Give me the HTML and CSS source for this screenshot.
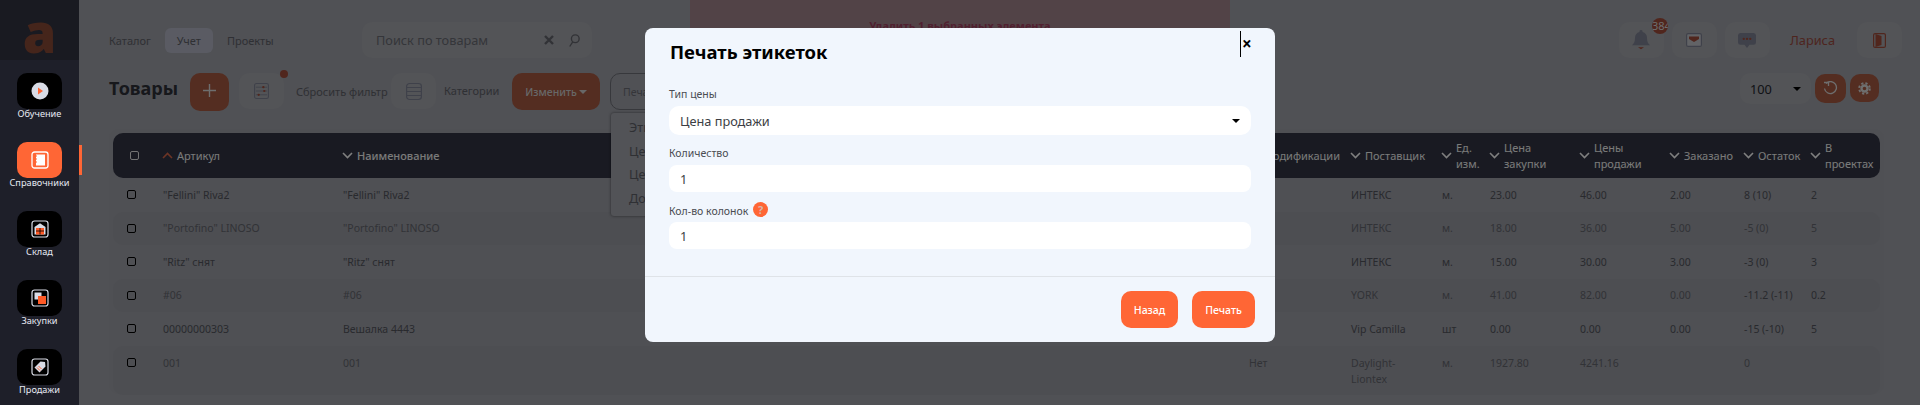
FILE: index.html
```html
<!DOCTYPE html>
<html lang="ru">
<head>
	<meta charset="UTF-8">
	<title>Товары</title>
	<link rel="stylesheet" href="styles.css">
</head>
<body>
	<div class="page">
		<aside class="side">
			<div class="logo">a</div>
			<nav class="menu">
				<a class="item">
					<span class="ico"><svg width="18" height="18" viewBox="0 0 18 18"><circle cx="9" cy="9" r="8.5" fill="#d9dce6"/><path d="M7 5.5l5 3.5-5 3.5z" fill="#ff6635"/></svg></span>
					<span class="lbl">Обучение</span>
				</a>
				<a class="item on">
					<span class="ico"><svg width="18" height="18" viewBox="0 0 18 18" fill="none" stroke="#fff"><rect x="1" y="1" width="16" height="16" rx="2.5" stroke-width="1.3"/><path d="M5 3.5h9v11H5z" fill="#fff" stroke="none"/><path d="M3 5h3M3 8h3M3 11h3" stroke="#ff6635" stroke-width="1.2"/></svg></span>
					<span class="lbl">Справочники</span>
				</a>
				<a class="item">
					<span class="ico"><svg width="18" height="18" viewBox="0 0 18 18" fill="none" stroke="#d9dce6"><rect x="1" y="1" width="16" height="16" rx="2.5" stroke-width="1.2"/><path d="M3.500 7L9 3.200 14.500 7v7.500h-11z" fill="#d9dce6" stroke="none"/><path d="M5 8h8v6.500H5z" fill="#ff5a26" stroke="none"/><path d="M9 8v6.500M5 11h8" stroke="#000" stroke-width=".8"/></svg></span>
					<span class="lbl">Склад</span>
				</a>
				<a class="item">
					<span class="ico"><svg width="18" height="18" viewBox="0 0 18 18" fill="none"><rect x="1" y="1" width="16" height="16" rx="2.5" stroke="#d9dce6" stroke-width="1.2"/><path d="M3.500 3.500h7v7h-7z" fill="#d9dce6"/><path d="M7 7h8v8H7z" fill="#ff5a26"/></svg></span>
					<span class="lbl">Закупки</span>
				</a>
				<a class="item">
					<span class="ico"><svg width="18" height="18" viewBox="0 0 18 18" fill="none"><rect x="1" y="1" width="16" height="16" rx="2.5" stroke="#d9dce6" stroke-width="1.2"/><path d="M9.500 3.500l4.500.5.500 4.500-6 6-5-5z" fill="#d9dce6"/><path d="M6 9.500l3 3M7.500 8l3 3" stroke="#ff6635"/></svg></span>
					<span class="lbl">Продажи</span>
				</a>
			</nav>
		</aside>

		<main class="main">
			<div class="alert">Удалить 1 выбранных элемента</div>

			<header class="top">
				<ul class="tabs">
					<li>Каталог</li>
					<li class="cur">Учет</li>
					<li>Проекты</li>
				</ul>
				<div class="search">
					<span class="ph">Поиск по товарам</span>
					<svg width="10" height="10" viewBox="0 0 10 10"><path d="M1 1l8 8M9 1l-8 8" stroke="#2e3038" stroke-width="2.400"/></svg>
					<svg width="12" height="15" viewBox="0 0 14 16" fill="none" stroke="#2e3038" stroke-width="1.600"><circle cx="8.500" cy="6" r="4.500"/><path d="M5.500 9.500L2 15"/></svg>
				</div>
				<div class="user">
					<span class="sq bell">
						<svg width="18" height="23" viewBox="0 0 18 26" preserveAspectRatio="none"><path d="M9 1a1.500 1.500 0 011.500 1.500v1c3 .8 4.500 3.500 4.500 6.500 0 4 .8 6.500 3 8.500H0c2.200-2 3-4.500 3-8.500 0-3 1.500-5.700 4.500-6.500v-1A1.500 1.500 0 019 1z" fill="#7e8294"/><path d="M6 20.500h6l-3 2.500z" fill="#a04c3a"/></svg>
						<b class="badge">384</b>
					</span>
					<span class="sq"><svg width="16" height="14" viewBox="0 0 16 14" fill="none"><rect x=".6" y=".6" width="14.800" height="12.800" rx="1.500" fill="#c4c6cc" stroke="#7e8294" stroke-width="1.200"/><path d="M3 3.500h10v2.500l-5 3-5-3z" fill="#a04c3a"/></svg></span>
					<span class="sq"><svg width="18" height="15" viewBox="0 0 22 18" preserveAspectRatio="none"><path d="M3 0h16a3 3 0 013 3v8a3 3 0 01-3 3h-5l-3 4-3-4H3a3 3 0 01-3-3V3a3 3 0 013-3z" fill="#7e8294"/><circle cx="7" cy="7" r="1.400" fill="#a04c3a"/><circle cx="11" cy="7" r="1.400" fill="#a04c3a"/><circle cx="15" cy="7" r="1.400" fill="#a04c3a"/></svg></span>
					<span class="uname">Лариса</span>
					<span class="sq"><svg width="13" height="15" viewBox="0 0 13 15" fill="none" stroke="#a04c3a" stroke-width="1.200"><rect x=".6" y=".6" width="11.800" height="13.800" rx="1.500"/><path d="M2.500 1v13l6-2V3z" fill="#a04c3a" stroke="none"/></svg></span>
				</div>
			</header>

			<div class="tools">
				<h1>Товары</h1>
				<button class="add"><svg width="13" height="13" viewBox="0 0 14 14"><path d="M7 0v14M0 7h14" stroke="#dcdcdc" stroke-width="1.500"/></svg></button>
				<span class="sq filter">
					<svg width="15" height="16" viewBox="0 0 16 19" fill="none" preserveAspectRatio="none"><rect x=".6" y=".6" width="14.800" height="17.800" rx="2" stroke="#7e8294" stroke-width="1.200"/><path d="M2 5h12M2 9.500h12M2 14h12" stroke="#7e8294"/><circle cx="10" cy="5" r="1.300" fill="#a04c3a"/><circle cx="11" cy="9.500" r="1.300" fill="#a04c3a"/><circle cx="5" cy="14" r="1.300" fill="#a04c3a"/></svg>
					<i class="dot"></i>
				</span>
				<span class="link reset">Сбросить фильтр</span>
				<span class="sq"><svg width="16" height="17" viewBox="0 0 16 19" fill="none" stroke="#7e8294" stroke-width="1.200" preserveAspectRatio="none"><rect x=".6" y=".6" width="14.800" height="17.800" rx="3"/><path d="M1 5h14M1 9.500h14M1 14h14"/></svg></span>
				<span class="link cats">Категории</span>
				<button class="edit">Изменить<i class="caret"></i></button>
				<div class="print">
					<button class="print-btn">Печать</button>
					<ul class="drop">
						<li>Этикетки</li>
						<li>Ценники</li>
						<li>Цены</li>
						<li>Документы</li>
					</ul>
				</div>
				<div class="tools-right">
					<div class="per">100<i class="caret dark"></i></div>
					<button class="mini reload"><svg width="15" height="15" viewBox="0 0 15 15" fill="none" stroke="#dcdcdc" stroke-width="1.300"><path d="M3 2.500a6 6 0 11-1.500 5"/><path d="M1 1.500h4.500V5"/></svg></button>
					<button class="mini gear"><svg width="13" height="13" viewBox="0 0 13 13" fill="none" stroke="#dcdcdc"><circle cx="6.500" cy="6.500" r="3" stroke-width="2.400"/><circle cx="6.500" cy="6.500" r="5.300" stroke-width="2" stroke-dasharray="2.200 2"/></svg></button>
				</div>
			</div>

			<section class="panel">
				<div class="row head">
					<div class="cell"><i class="box"></i></div>
					<div class="cell"><svg class="chev" viewBox="0 0 11 7"><path d="M1 6l4.500-4.500L10 6" stroke="#d8684a"/></svg><span>Артикул</span></div>
					<div class="cell strong"><svg class="chev" viewBox="0 0 11 7"><path d="M1 1l4.500 4.500L10 1"/></svg><span>Наименование</span></div>
					<div class="cell"><svg class="chev" viewBox="0 0 11 7"><path d="M1 1l4.500 4.500L10 1"/></svg><span>Модификации</span></div>
					<div class="cell"><svg class="chev" viewBox="0 0 11 7"><path d="M1 1l4.500 4.500L10 1"/></svg><span>Поставщик</span></div>
					<div class="cell"><svg class="chev" viewBox="0 0 11 7"><path d="M1 1l4.500 4.500L10 1"/></svg><span>Ед. изм.</span></div>
					<div class="cell"><svg class="chev" viewBox="0 0 11 7"><path d="M1 1l4.500 4.500L10 1"/></svg><span>Цена закупки</span></div>
					<div class="cell"><svg class="chev" viewBox="0 0 11 7"><path d="M1 1l4.500 4.500L10 1"/></svg><span>Цены продажи</span></div>
					<div class="cell"><svg class="chev" viewBox="0 0 11 7"><path d="M1 1l4.500 4.500L10 1"/></svg><span>Заказано</span></div>
					<div class="cell"><svg class="chev" viewBox="0 0 11 7"><path d="M1 1l4.500 4.500L10 1"/></svg><span>Остаток</span></div>
					<div class="cell"><svg class="chev" viewBox="0 0 11 7"><path d="M1 1l4.500 4.500L10 1"/></svg><span>В проектах</span></div>
				</div>
				<div class="row">
					<div><i class="box"></i></div><div>"Fellini" Riva2</div><div>"Fellini" Riva2</div><div></div><div>ИНТЕКС</div><div>м.</div><div>23.00</div><div>46.00</div><div>2.00</div><div>8 (10)</div><div>2</div>
				</div>
				<div class="row alt">
					<div><i class="box"></i></div><div>"Portofino" LINOSO</div><div>"Portofino" LINOSO</div><div></div><div>ИНТЕКС</div><div>м.</div><div>18.00</div><div>36.00</div><div>5.00</div><div>-5 (0)</div><div>5</div>
				</div>
				<div class="row">
					<div><i class="box"></i></div><div>"Ritz" снят</div><div>"Ritz" снят</div><div></div><div>ИНТЕКС</div><div>м.</div><div>15.00</div><div>30.00</div><div>3.00</div><div>-3 (0)</div><div>3</div>
				</div>
				<div class="row alt">
					<div><i class="box"></i></div><div>#06</div><div>#06</div><div></div><div>YORK</div><div>м.</div><div>41.00</div><div>82.00</div><div>0.00</div><div class="dk">-11.2 (-11)</div><div class="dk">0.2</div>
				</div>
				<div class="row">
					<div><i class="box"></i></div><div>00000000303</div><div>Вешалка 4443</div><div></div><div>Vip Camilla</div><div>шт</div><div>0.00</div><div>0.00</div><div>0.00</div><div>-15 (-10)</div><div>5</div>
				</div>
				<div class="row alt last">
					<div><i class="box"></i></div><div>001</div><div>001</div><div>Нет</div><div>Daylight-<br>Liontex</div><div>м.</div><div>1927.80</div><div>4241.16</div><div></div><div>0</div><div></div>
				</div>
			</section>
		</main>

		<div class="shade">
			<div class="modal">
				<span class="close">×</span>
				<h2>Печать этикеток</h2>
				<form class="form">
					<label>Тип цены</label>
					<div class="field sel">Цена продажи<i class="caret dark"></i></div>
					<label>Количество</label>
					<div class="field">1</div>
					<label>Кол-во колонок <b class="help">?</b></label>
					<div class="field">1</div>
				</form>
				<div class="foot">
					<button class="btn back">Назад</button>
					<button class="btn">Печать</button>
				</div>
			</div>
		</div>
	</div>
</body>
</html>
```
FILE: styles.css
```css
*{
	margin: 0;
	padding: 0;
	box-sizing: border-box;
}
html,body{
	height: 100%;
	overflow: hidden;
}
body{
	font-family: "Noto Sans", "Liberation Sans", sans-serif;
	font-size: 10.5px;
	background-color: #a0a2aa;
}
ul{
	list-style: none;
}
button{
	font-family: inherit;
	border: 0;
}
i{
	font-style: normal;
}
.page{
	position: relative;
	display: flex;
	height: 405px;
	overflow: hidden;
}

/* sidebar */
.side{
	width: 79px;
	flex: none;
	background-color: #3c3e52;
}
.logo{
	height: 60px;
	padding-top: 4px;
	background-color: #323442;
	color: #8a4a36;
	font-size: 54px;
	font-weight: 900;
	line-height: 56px;
	text-align: center;
}
.menu{
	position: relative;
	z-index: 20;
	height: 345px;
	padding-top: 13px;
	background-color: #1e1f29;
}
.item{
	position: relative;
	display: flex;
	flex-direction: column;
	align-items: center;
	height: 69px;
}
.ico{
	display: flex;
	align-items: center;
	justify-content: center;
	width: 45px;
	height: 36px;
	background-color: #000;
	border-radius: 10px;
}
.lbl{
	font-size: 9.2px;
	line-height: 10px;
	color: #e6e9f2;
}
.on .ico{
	background-color: #ff6635;
}
.on::after{
	content: "";
	position: absolute;
	right: -3px;
	top: 3px;
	width: 3px;
	height: 30px;
	background-color: #ff6635;
}

/* main */
.main{
	position: relative;
	flex: 1;
	min-width: 0;
	padding-left: 30px;
}
.alert{
	position: absolute;
	left: 611px;
	top: 0;
	width: 540px;
	height: 50px;
	padding-top: 18px;
	background-color: #a4868f;
	color: #a04060;
	font-size: 11px;
	font-weight: 700;
	text-align: center;
}
.top{
	display: flex;
	align-items: center;
	height: 36px;
	margin-top: 22px;
	padding-right: 18px;
}
.tabs{
	display: flex;
	align-items: center;
	gap: 14px;
	width: 253px;
	font-size: 11px;
	color: #5e6068;
}
.tabs li{
	line-height: 25px;
}
.tabs .cur{
	padding: 0 12px;
	background-color: #b4b7c6;
	border-radius: 6px;
}
.search{
	display: flex;
	align-items: center;
	width: 230px;
	height: 36px;
	padding: 0 12px 0 14px;
	background-color: #a6a8ae;
	border-radius: 10px;
}
.ph{
	flex: 1;
	font-size: 12.750px;
	color: #6a6c74;
}
.search svg{
	margin-left: 14px;
	opacity: .55;
}
.user{
	display: flex;
	align-items: center;
	margin-left: auto;
	gap: 8px;
}
.sq{
	position: relative;
	display: flex;
	align-items: center;
	justify-content: center;
	width: 45px;
	height: 36px;
	background-color: #a6a8ae;
	border-radius: 10px;
}
.badge{
	position: absolute;
	right: -4px;
	top: -4px;
	width: 16px;
	height: 16px;
	overflow: hidden;
	background-color: #a04c3a;
	border-radius: 50%;
	color: #dcdcdc;
	font-size: 11px;
	font-weight: 400;
	line-height: 16px;
	white-space: nowrap;
}
.uname{
	margin: 0 14px 0 12px;
	font-size: 12.750px;
	color: #9c4a3e;
}

/* toolbar */
.tools{
	display: flex;
	align-items: flex-start;
	height: 56px;
	margin-top: 15px;
	padding-right: 41px;
}
h1{
	width: 81px;
	font-size: 18px;
	line-height: 30px;
	color: #2e3038;
}
.add{
	width: 39px;
	height: 38px;
	background-color: #a85a42;
	border-radius: 10px;
}
.filter{
	margin-left: 10px;
}
.dot{
	position: absolute;
	right: -4px;
	top: -3px;
	width: 8px;
	height: 8px;
	background-color: #a04c3a;
	border-radius: 50%;
}
.link{
	font-size: 11px;
	line-height: 37px;
	color: #5e6068;
}
.reset{
	width: 95px;
	margin-left: 12px;
	white-space: nowrap;
}
.cats{
	width: 68px;
	margin-left: 8px;
	line-height: 35px;
}
.edit{
	display: flex;
	align-items: center;
	justify-content: center;
	width: 88px;
	height: 37px;
	background-color: #a85a42;
	border-radius: 10px;
	color: #cfcfcf;
	font-size: 10.5px;
	font-weight: 500;
}
.caret{
	width: 0;
	height: 0;
	margin-left: 2px;
	border-top: 4px solid #cfcfcf;
	border-left: 4px solid transparent;
	border-right: 4px solid transparent;
}
.caret.dark{
	border-top-color: #000;
	margin-left: auto;
}
.print{
	position: relative;
	margin-left: 10px;
}
.print-btn{
	width: 95px;
	height: 37px;
	padding-left: 12px;
	background-color: transparent;
	border: 1px solid #6e7078;
	border-radius: 10px;
	color: #6a6c74;
	font-size: 10.5px;
	text-align: left;
}
.drop{
	position: absolute;
	left: 1px;
	top: 40px;
	width: 160px;
	height: 103px;
	padding: 3px 0 0 18px;
	background-color: #a4a6ae;
	border-radius: 3px;
	box-shadow: 0 0 3px rgba(0,0,0,.5);
	font-size: 12.750px;
	line-height: 23.500px;
	color: #5e6068;
}
.tools-right{
	display: flex;
	margin-left: auto;
	align-items: flex-start;
}
.per{
	display: flex;
	align-items: center;
	width: 71px;
	height: 31px;
	padding: 0 10px;
	background-color: #a6a8ae;
	border-radius: 10px;
	color: #22242c;
	font-size: 12.750px;
}
.mini{
	display: flex;
	align-items: center;
	justify-content: center;
	height: 29px;
	margin-top: 1px;
	background-color: #a85a42;
	border-radius: 10px;
}
.reload{
	width: 31px;
	margin-left: 4px;
}
.gear{
	width: 29px;
	height: 28px;
	margin-left: 4px;
}

/* table */
.panel{
	width: 1775px;
	height: 265px;
	padding: 4px 4px 0;
	background-color: #9ea0a8;
	border-radius: 10px;
}
.row{
	display: grid;
	grid-template-columns: 40px 180px 906px 102px 91px 48px 90px 90px 74px 67px 79px;
	align-items: center;
	height: 33.500px;
	line-height: 16px;
	color: #52545c;
	border-radius: 10px;
}
.row > div{
	padding-left: 10px;
}
.row > div:first-child{
	padding-left: 14px;
	display: flex;
}
.row .box{
	display: block;
	width: 9px;
	height: 9px;
	border: 1px solid #000;
	border-radius: 2px;
}
.alt{
	background-color: #9a9ca4;
	color: #64666e;
}
.alt .dk{
	color: #52545c;
}
.last{
	height: 49px;
	align-items: start;
	padding-top: 9px;
}
.last > div:first-child{
	padding-top: 3px;
}
.head{
	height: 45px;
	background-color: #323444;
	color: #f4f4f4;
	font-size: 11px;
}
.head .cell{
	display: flex;
	align-items: center;
	padding-left: 9px;
	min-width: 0;
}
.head > .cell:first-child{
	padding-left: 17px;
}
.head .box{
	border-color: #e6e6e6;
}
.strong{
	font-weight: 500;
}
.chev{
	flex: none;
	width: 11px;
	height: 7px;
	margin-right: 4px;
	fill: none;
	stroke: #fff;
	stroke-width: 1.600;
}

/* print dialog */
.shade{
	position: absolute;
	left: 0;
	top: 0;
	right: 0;
	bottom: 0;
	z-index: 10;
	display: flex;
	justify-content: center;
	align-items: flex-start;
	padding-top: 28px;
	background-color: rgba(0,0,0,.5);
}
.modal{
	position: relative;
	width: 630px;
	height: 314px;
	padding-top: 12px;
	background-color: #f1f6fd;
	border-radius: 8px;
}
.close{
	position: absolute;
	left: 595px;
	top: 3px;
	width: 14px;
	height: 26px;
	padding-left: 1px;
	border-left: 1px solid #000;
	color: #000;
	font-size: 17px;
	font-weight: 700;
	line-height: 26px;
}
h2{
	padding-left: 25px;
	font-size: 18.500px;
	line-height: 24px;
	color: #000;
}
.form{
	padding: 22px 24px 0;
}
label{
	display: block;
	height: 16px;
	line-height: 16px;
	color: #4a4c52;
}
.field{
	display: flex;
	align-items: center;
	height: 27px;
	margin: 4px 0 10px;
	padding: 0 11px;
	background-color: #fff;
	border-radius: 8px;
	font-size: 12.750px;
	color: #3c3e44;
}
.sel{
	height: 29px;
	border-radius: 10px;
}
.help{
	display: inline-block;
	width: 15px;
	height: 15px;
	margin-left: 2px;
	background-color: #ff6635;
	border-radius: 50%;
	color: #d9b5a8;
	font-size: 11px;
	line-height: 15px;
	text-align: center;
	vertical-align: 1px;
}
.foot{
	position: absolute;
	left: 0;
	right: 0;
	bottom: 0;
	display: flex;
	justify-content: flex-end;
	gap: 14px;
	height: 66px;
	padding: 14px 20px 0 0;
	border-top: 1px solid #dfe3e8;
}
.btn{
	width: 63px;
	height: 37px;
	background-color: #ff6635;
	border-radius: 10px;
	color: #fff;
	font-size: 10.5px;
	font-weight: 500;
}
.back{
	width: 57px;
}
```
